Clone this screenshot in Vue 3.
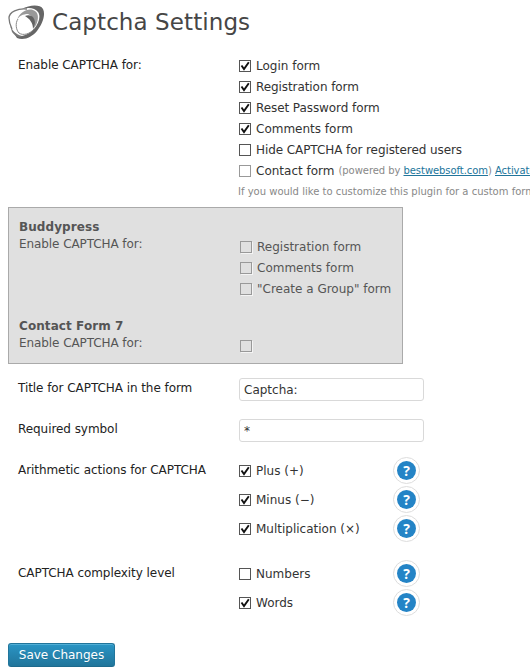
<script setup>
import { ref } from 'vue'

const forms = ref([
  { label: 'Login form', on: true },
  { label: 'Registration form', on: true },
  { label: 'Reset Password form', on: true },
  { label: 'Comments form', on: true },
  { label: 'Hide CAPTCHA for registered users', on: false },
])
const buddypress = ['Registration form', 'Comments form', '"Create a Group" form']
const title = ref('Captcha:')
const symbol = ref('*')
const choices = ref([
  {
    name: 'Arithmetic actions for CAPTCHA',
    items: [
      { label: 'Plus (+)', on: true },
      { label: 'Minus (−)', on: true },
      { label: 'Multiplication (×)', on: true },
    ],
  },
  {
    name: 'CAPTCHA complexity level',
    items: [
      { label: 'Numbers', on: false },
      { label: 'Words', on: true },
    ],
  },
])
</script>

<template>
  <main class="page">
    <header class="header">
      <svg class="logo" width="38" height="36" viewBox="0 0 38 36">
        <path fill="#666" d="M14 4C21 0 32 -1 35 4C38 10 34 20 29 26C24 32 16 36 9 33L7 30C14 33 21 29 26 24C31 18 33 11 30 7C27 3 21 2 14 4Z" />
        <path fill="#999" d="M9 15C11 8 19 3 25 5C31 7 31 14 28 20L26 23C27 16 25 11 20 9C15 9 11 11 9 15Z" />
        <path fill="#626262" d="M17 11C25 8 29 16 26 22L25 24C25 18 22 14 17 11Z" />
        <path fill="#777" d="M2 20C4 25 7 29 14 31C11 34 7 31 4 27Z" />
        <path fill="none" stroke="#777" stroke-width="1.3" d="M19 4C10 3 1 7 1 13C1 17 2 20 4 24" />
        <path fill="none" stroke="#888" stroke-width="1" d="M10 14C7 18 8 25 11 28C15 31 22 29 26 24" />
      </svg>
      <h1>Captcha Settings</h1>
    </header>

    <section class="setting enable">
      <div class="name">Enable CAPTCHA for:</div>
      <div>
        <label v-for="f in forms" :key="f.label" class="option" :class="{ tight: f.label.length > 14 }">
          <input v-model="f.on" class="native" type="checkbox" />
          <span class="box"><svg v-if="f.on" viewBox="0 0 12 12"><path d="M2.5 5.5L5 9L9.8 2.2" /></svg></span>
          <span class="caption">{{ f.label }}</span>
        </label>
        <div class="option">
          <span class="box light"></span><span class="caption">Contact form</span>
          <span class="hint">(powered by <a href="#">bestwebsoft.com</a>) <a href="#">Activate</a></span>
        </div>
        <p class="note">If you would like to customize this plugin for a custom form</p>
      </div>
    </section>

    <section class="disabled">
      <div class="plugin buddy">
        <div class="plugin-name"><h2>Buddypress</h2><p>Enable CAPTCHA for:</p></div>
        <div class="plugin-options">
          <div v-for="label in buddypress" :key="label" class="option"><span class="box muted"></span><span class="caption">{{ label }}</span></div>
        </div>
      </div>
      <div class="plugin">
        <div class="plugin-name"><h2>Contact Form 7</h2><p>Enable CAPTCHA for:</p></div>
        <div class="plugin-options"><div class="option"><span class="box muted"></span></div></div>
      </div>
    </section>

    <section class="setting field">
      <label class="name" for="title">Title for CAPTCHA in the form</label>
      <input id="title" v-model="title" class="text" type="text" />
    </section>
    <section class="setting field">
      <label class="name" for="symbol">Required symbol</label>
      <input id="symbol" v-model="symbol" class="text" type="text" />
    </section>

    <section v-for="c in choices" :key="c.name" class="setting choice">
      <div class="name">{{ c.name }}</div>
      <div>
        <div v-for="i in c.items" :key="i.label" class="choice-row">
          <label class="option">
            <input v-model="i.on" class="native" type="checkbox" />
            <span class="box"><svg v-if="i.on" viewBox="0 0 12 12"><path d="M2.5 5.5L5 9L9.8 2.2" /></svg></span>
            <span class="caption">{{ i.label }}</span>
          </label>
          <span class="help"><span class="help-mark">?</span></span>
        </div>
      </div>
    </section>

    <button class="save" type="button">Save Changes</button>
  </main>
</template>

<style>
html, body { background: #fff; overflow: hidden; }
</style>

<style scoped>
.page {
  box-sizing: border-box;
  width: 530px;
  height: 672px;
  padding-left: 8px;
  overflow: hidden;
  font: 12px/17px "DejaVu Sans", sans-serif;
  color: #333;
}
.header { display: flex; height: 55px; padding-top: 5px; box-sizing: border-box; }
.logo { flex: none; margin-right: 6px; }
h1 { margin: 0; font-size: 23px; font-weight: 400; line-height: 34px; letter-spacing: 0.09px; color: #464646; }
.setting { display: grid; grid-template-columns: 221px 1fr; padding-left: 10px; }
.name { color: #222; line-height: 21px; letter-spacing: -0.06px; white-space: nowrap; }
.enable { height: 152px; }
.option { display: flex; align-items: center; height: 21px; white-space: nowrap; }
.tight { letter-spacing: -0.08px; }
.caption { padding-top: 1px; }
.native { display: none; }
.box {
  flex: none;
  box-sizing: border-box;
  width: 12px;
  height: 12px;
  margin: 1px 5px 0 0;
  border: 1px solid #555;
  background: #fff;
}
.box svg { display: block; width: 12px; height: 12px; margin: -1px; }
.box path { fill: none; stroke: #111; stroke-width: 1.9; }
.light { border-color: #999; }
.muted { border-color: #999; background: #e0e0e0; box-shadow: 1px 1px 0 #f4f4f4; }
.hint { margin-left: 4px; font-size: 10px; letter-spacing: -0.06px; color: #888; }
.hint a { color: #21759b; }
.note { margin: 0 0 0 -1px; font-size: 10px; line-height: 21px; color: #888; white-space: nowrap; }
.disabled {
  box-sizing: border-box;
  width: 395px;
  height: 157px;
  padding: 11px 0 0 10px;
  border: 1px solid #aaa;
  background: #e0e0e0;
  color: #555;
}
.plugin { display: grid; grid-template-columns: 221px 1fr; }
.buddy { height: 99px; }
.plugin h2 { margin: 0; font-size: 12px; line-height: 17px; letter-spacing: 0.08px; }
.plugin p { margin: 0; letter-spacing: -0.08px; }
.plugin-options { padding-top: 17px; }
.field { height: 41px; align-items: start; }
.disabled + .field { margin-top: 14px; }
.text {
  box-sizing: border-box;
  width: 185px;
  height: 23px;
  padding: 0 4px;
  border: 1px solid #d9d9d9;
  border-radius: 3px;
  background: #fff;
  font: inherit;
  color: #333;
  outline: none;
}
.choice { margin-bottom: 16px; }
.choice .name { line-height: 20px; }
.choice-row { display: grid; grid-template-columns: 154px 27px; height: 29px; }
.help {
  display: flex;
  align-items: center;
  justify-content: center;
  box-sizing: border-box;
  width: 27px;
  height: 27px;
  margin-top: -3px;
  border: 1px solid #ddd;
  border-radius: 50%;
}
.help-mark {
  width: 19px;
  height: 19px;
  border-radius: 50%;
  background: #2484c6;
  color: #fff;
  font: bold 14px/19px "Open Sans", sans-serif;
  text-align: center;
}
.save {
  display: block;
  width: 107px;
  height: 24px;
  margin-top: 22px;
  padding: 0;
  border: 1px solid #21759b;
  border-bottom-color: #1e6a8d;
  border-radius: 3px;
  background: linear-gradient(#2a95c5, #21759b);
  box-shadow: inset 0 1px 0 rgba(120, 200, 230, 0.5);
  color: #fff;
  font: 12px/22px "DejaVu Sans", sans-serif;
  text-shadow: 0 1px 0 rgba(0, 0, 0, 0.1);
}
</style>
